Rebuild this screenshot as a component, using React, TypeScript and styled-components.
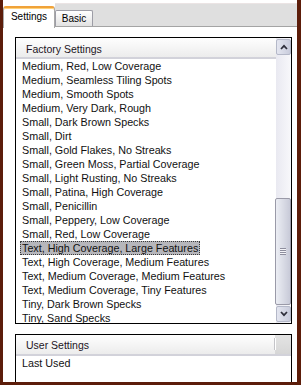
import styled, { createGlobalStyle } from 'styled-components';

const GlobalStyle = createGlobalStyle`
  html, body {
    margin: 0;
    padding: 0;
    background: #ffffff;
  }
  * {
    box-sizing: border-box;
  }
`;

const factoryItems = [
  "Medium, Red, Low Coverage",
  "Medium, Seamless Tiling Spots",
  "Medium, Smooth Spots",
  "Medium, Very Dark, Rough",
  "Small, Dark Brown Specks",
  "Small, Dirt",
  "Small, Gold Flakes, No Streaks",
  "Small, Green Moss, Partial Coverage",
  "Small, Light Rusting, No Streaks",
  "Small, Patina, High Coverage",
  "Small, Penicillin",
  "Small, Peppery, Low Coverage",
  "Small, Red, Low Coverage",
  "Text, High Coverage, Large Features",
  "Text, High Coverage, Medium Features",
  "Text, Medium Coverage, Medium Features",
  "Text, Medium Coverage, Tiny Features",
  "Tiny, Dark Brown Specks",
  "Tiny, Sand Specks"
];

const selectedIndex = 13;

const Frame = styled.div`
  width: 301px;
  height: 385px;
  border-left: 3px solid #5c1d0a;
  border-right: 4px solid #5c1d0a;
  border-bottom: 3px solid #5c1d0a;
  background: #ffffff;
  display: flex;
  flex-direction: column;
  overflow: hidden;
  font-family: "Liberation Sans", Arial, sans-serif;
  color: #111;
`;

const TabStrip = styled.div`
  height: 24px;
  margin-top: 3px;
  display: flex;
  align-items: flex-end;
  background: #dfdfdf;
  border-top: 1px solid #ebe4e4;
  border-bottom: 1px solid #a4a4a4;
  flex-shrink: 0;
`;

const ActiveTab = styled.div`
  width: 52px;
  height: 25px;
  margin-bottom: -2px;
  padding-top: 3px;
  background: #ffffff;
  display: flex;
  position: relative;
`;

const ActiveFace = styled.div`
  flex: 1;
  border-top: 2px solid #f0a23a;
  border-left: 1px solid #a9a9a9;
  border-right: 1px solid #a9a9a9;
  border-radius: 3px 3px 0 0;
  box-shadow: inset 0 1px 0 #ffd27a;
  background: #ffffff;
  font-size: 10px;
  line-height: 12px;
  padding-top: 3px;
  text-align: center;
  color: #000;
`;

const Tab = styled.div`
  width: 38px;
  height: 16px;
  border: 1px solid #9d9da6;
  border-bottom: none;
  border-radius: 2px 2px 0 0;
  background: linear-gradient(#ffffff, #e2e2e2);
  font-size: 10px;
  line-height: 12px;
  padding-top: 2px;
  text-align: center;
  color: #000;
`;

const Panel = styled.div`
  flex: 1;
  min-height: 0;
  display: flex;
  flex-direction: column;
  padding: 10px 5px 0 12px;
  background: #ffffff;
`;

const ListBox = styled.div<{ $fill?: boolean }>`
  border: 1px solid #000;
  display: flex;
  overflow: hidden;
  background: #ffffff;
  ${p => p.$fill
    ? `flex: 1; margin-top: 10px; border-bottom: none; flex-direction: column;`
    : `height: 287px; flex-shrink: 0;`}
`;

const ListMain = styled.div`
  flex: 1;
  min-width: 0;
  display: flex;
  flex-direction: column;
  overflow: hidden;
`;

const HeaderRow = styled.div`
  display: flex;
  flex-shrink: 0;
`;

const ColumnHeader = styled.div<{ $top: number; $sep?: boolean }>`
  flex: 1;
  height: 21px;
  padding-top: ${p => p.$top}px;
  padding-left: 10px;
  font-size: 10.5px;
  line-height: 14px;
  color: #1c1424;
  background: linear-gradient(#fefefe, #ececec);
  border-bottom: 2px solid #d2d2da;
  position: relative;
  ${p => p.$sep ? `
    &::after {
      content: '';
      position: absolute;
      right: 0;
      top: 3px;
      bottom: 4px;
      width: 1px;
      background: #c4c4c8;
      box-shadow: 1px 0 0 #fff;
    }
  ` : ''}
`;

const HeaderFiller = styled.div`
  width: 16px;
  height: 21px;
  background: linear-gradient(#e4e4e4, #d6d6d6);
  border-bottom: 2px solid #d2d2da;
`;

const Row = styled.div`
  height: 14px;
  line-height: 14px;
  padding-left: 4px;
  font-size: 10.75px;
  white-space: nowrap;
  flex-shrink: 0;
`;

const Label = styled.span<{ $selected?: boolean }>`
  display: inline-block;
  height: 14px;
  padding: 0 2px;
  ${p => p.$selected ? `
    background: #b6b6bb;
    outline: 1px dotted #3a3a3a;
    outline-offset: -1px;
  ` : ''}
`;

const Scrollbar = styled.div`
  width: 15px;
  flex-shrink: 0;
  padding: 1px 0;
  display: flex;
  flex-direction: column;
  background: linear-gradient(to right, #e9e9f1, #f8f8fb);
`;

const ScrollButton = styled.div`
  height: 16px;
  flex-shrink: 0;
  border: 1px solid #b4b8c8;
  border-radius: 2px;
  background: linear-gradient(to right, #e4e6f0, #c9ccdc);
  display: flex;
  align-items: center;
  justify-content: center;
`;

const Track = styled.div`
  flex: 1;
  display: flex;
  flex-direction: column;
  justify-content: flex-end;
  padding-bottom: 1px;
`;

const Thumb = styled.div`
  height: 107px;
  margin-left: -1px;
  border: 1px solid #9a9aa8;
  border-radius: 2px;
  background: linear-gradient(to right, #eceef4, #c8cad8);
  display: flex;
  align-items: center;
  justify-content: center;
`;

const Grip = styled.div`
  width: 6px;
  height: 7px;
  background: repeating-linear-gradient(to bottom, #8e8e9e 0 1px, #f4f4f8 1px 2px);
`;

function Chevron({ up }: { up?: boolean }) {
  return (
    <svg width="8" height="6" viewBox="0 0 8 6">
      <path
        d={up ? 'M1 5 L4 1.8 L7 5' : 'M1 1 L4 4.2 L7 1'}
        stroke="#2e2e3a"
        strokeWidth="1.7"
        fill="none"
      />
    </svg>
  );
}

export default function App() {
  return (
    <>
      <GlobalStyle />
      <Frame>
        <TabStrip>
          <ActiveTab>
            <ActiveFace>Settings</ActiveFace>
          </ActiveTab>
          <Tab>Basic</Tab>
        </TabStrip>

        <Panel>
          <ListBox>
            <ListMain>
              <HeaderRow>
                <ColumnHeader $top={4}>Factory Settings</ColumnHeader>
              </HeaderRow>
              {factoryItems.map((item, i) => (
                <Row key={i}>
                  <Label $selected={i === selectedIndex}>{item}</Label>
                </Row>
              ))}
            </ListMain>
            <Scrollbar>
              <ScrollButton><Chevron up /></ScrollButton>
              <Track>
                <Thumb><Grip /></Thumb>
              </Track>
              <ScrollButton><Chevron /></ScrollButton>
            </Scrollbar>
          </ListBox>

          <ListBox $fill>
            <HeaderRow>
              <ColumnHeader $top={3} $sep>User Settings</ColumnHeader>
              <HeaderFiller />
            </HeaderRow>
            <Row>
              <Label>Last Used</Label>
            </Row>
          </ListBox>
        </Panel>
      </Frame>
    </>
  );
}
